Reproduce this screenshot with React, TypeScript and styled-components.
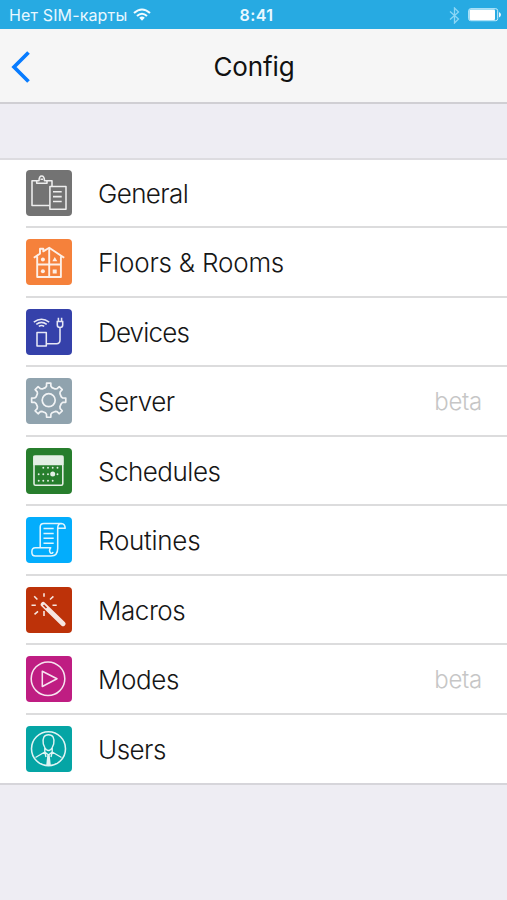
import React from 'react';
import styled, { createGlobalStyle } from 'styled-components';

const GlobalStyle = createGlobalStyle`
  * { box-sizing: border-box; }
  body { margin: 0; background: #eeedf3; font-family: Inter, "Liberation Sans", sans-serif; }
`;

const Screen = styled.div`
  display: flex;
  flex-direction: column;
  height: 900px;
  overflow: hidden;
  background: #eeedf3;
`;

const StatusBar = styled.header`
  display: grid;
  grid-template-columns: 1fr auto 1fr;
  align-items: center;
  flex: none;
  height: 29px;
  padding: 1px 5px 0 9px;
  background: #27aae2;
  color: #e9f8ff;
  font-size: 16px;
  line-height: 28px;
`;

const StatusGroup = styled.div<{ $end?: boolean }>`
  display: flex;
  align-items: center;
  justify-content: ${(p) => (p.$end ? 'flex-end' : 'flex-start')};
  gap: ${(p) => (p.$end ? '8px' : '6px')};
`;

const Carrier = styled.span`
  letter-spacing: 0.14px;
  white-space: nowrap;
`;

const Clock = styled.span`
  margin-left: 2px;
  font-weight: 600;
  letter-spacing: 0.4px;
`;

const NavBar = styled.nav`
  display: grid;
  grid-template-columns: 60px 1fr 60px;
  align-items: center;
  flex: none;
  height: 75px;
  border-bottom: 2px solid #d0cfd3;
  background: #f6f6f6;
`;

const BackButton = styled.button`
  display: flex;
  padding: 3px 0 0 10px;
  border: 0;
  background: none;
`;

const Title = styled.h1`
  margin: 2px 0 0 1px;
  color: #111;
  font-size: 26px;
  font-weight: 400;
  letter-spacing: -0.1px;
  line-height: 32px;
  text-align: center;
`;

const List = styled.ul`
  flex: none;
  margin: 54px 0 0;
  padding: 0;
  border-top: 2px solid #dddce0;
  border-bottom: 2px solid #d6d5da;
  background: #fff;
  list-style: none;
`;

const Row = styled.li`
  display: flex;
  align-items: center;
  height: 69.5px;
  padding-left: 26px;

  &:last-child {
    margin-bottom: -2.5px;
  }
`;

const Tile = styled.div<{ $color: string }>`
  flex: none;
  width: 46px;
  height: 46px;
  margin-top: -4px;
  border-radius: 4px;
  background: ${(p) => p.$color};
`;

const Glyph = styled.svg`
  display: block;
  width: 46px;
  height: 46px;
  fill: none;
  stroke: #fff;
  stroke-width: 1.55;
  stroke-linejoin: round;
  opacity: 0.88;
`;

const RowBody = styled.div<{ $divided: boolean }>`
  display: flex;
  flex: 1;
  align-items: center;
  justify-content: space-between;
  height: 100%;
  padding: 0 25px 2px 0;
`;

const Label = styled.span<{ $spacing: number }>`
  margin-left: 26px;
  color: #161616;
  font-size: 26px;
  font-weight: 300;
  letter-spacing: ${(p) => p.$spacing}px;
  line-height: 32px;
`;

const Note = styled.span`
  color: #c6c6c6;
  font-size: 24px;
  font-weight: 300;
  letter-spacing: -0.3px;
  line-height: 32px;
`;

const Separator = styled.li`
  height: 2px;
  margin: -3.5px 0 1.5px 26px;
  background: #dcdcdd;
`;

const gearPath = (() => {
  const points: string[] = [];
  for (let i = 0; i < 8; i++) {
    [[-15, 13], [-9, 14.2], [-7, 17.2], [7, 17.2], [9, 14.2], [15, 13]].forEach(([offset, radius]) => {
      const angle = ((i * 45 + offset) * Math.PI) / 180;
      points.push(`${(22.7 + radius * Math.sin(angle)).toFixed(2)} ${(22.2 - radius * Math.cos(angle)).toFixed(2)}`);
    });
  }
  return `M${points.join('L')}Z`;
})();

const calendarDots = [
  [17.3, 19.7], [22, 19.7], [26.7, 19.7], [31.5, 19.7],
  [12.7, 26.3], [17.3, 26.3], [22, 26.3], [31.5, 26.3],
  [12.7, 32.7], [17.3, 32.7], [22, 32.7], [26.7, 32.7],
];

const icons: Record<string, React.ReactNode> = {
  general: (
    <>
      <path d="M11 10.8H6V35.5H23.7M20.5 10.8H26V16.3" />
      <path d="M10.7 13.2V10.8H13C13 7.5 14 6 15.7 6S18.4 7.5 18.5 10.8H21V13.2Z M14.5 9.2H17" />
      <path d="M23.9 16.5H40V39.3H23.9ZM27 21.8H35.7M27 26.6H35.7M27 31.4H35.7" />
    </>
  ),
  floors: (
    <>
      <path d="M7.8 18.8L14 14.6V9.8H17.3V12.4L23.2 8.8L38.2 18.8M11.2 17.5V38H34.9V17.5" strokeWidth="1.9" />
      <path d="M23.2 10V38M11.2 25.5H34.7" strokeWidth="1.9" />
      <g fill="#fff" stroke="none">
        <circle cx="16.9" cy="20.5" r="2" />
        <path d="M28.8 18L31.3 22.3H26.3ZM26.7 30.4H30.7V34.4H26.7Z" />
        <circle cx="16.9" cy="32.3" r="2" />
      </g>
    </>
  ),
  devices: (
    <>
      <path d="M7.8 13.2Q15.5 7.2 23.2 13.2M10.3 15.4Q15.5 11.4 20.7 15.4M12.8 17.4Q15.5 15.5 18.2 17.4" strokeWidth="1.6" />
      <path d="M11 23.5H20.3V37H11ZM20.3 34.7H30.5Q34 34.7 34 31V18.5M30.5 12.5H37.4M31.3 12.5V16Q31.3 18.5 34 18.5T36.7 16V12.5M32.4 12.5V8.7M35.6 12.5V8.7" />
    </>
  ),
  server: (
    <>
      <path d={gearPath} strokeWidth="1.7" />
      <circle cx="22.7" cy="22.2" r="6.5" strokeWidth="1.7" />
    </>
  ),
  schedules: (
    <>
      <rect x="8" y="8.2" width="28.8" height="29" rx="1.5" />
      <path d="M8 8.2H36.8V16.5H8Z" fill="#fff" />
      <g fill="#fff" stroke="none">
        {calendarDots.map(([x, y]) => <circle key={`${x}-${y}`} cx={x} cy={y} r="0.95" />)}
        <circle cx="26.7" cy="26" r="2.5" />
      </g>
    </>
  ),
  routines: (
    <>
      <path d="M14.2 30.8V10Q14.2 6.5 17.8 6.5H35.3Q39 6.7 39.2 11.3H31.7V31.5Q31.7 39 25 39H9.3C4.7 39 4.7 30.8 9.3 30.8H24.7Q22.5 33.5 24.5 36Q26.5 37 27 34.8M35.3 6.5Q31.7 6.7 31.7 11.3" />
      <path d="M17.5 11.5H27.7M17.5 16.4H27.7M17.5 21.3H27.7M17.5 26.2H27.7" />
    </>
  ),
  macros: (
    <>
      <path d="M17.2 17.5L37 36.7" stroke="#fff" strokeWidth="5" strokeLinecap="round" />
      <path d="M17.5 18L20.5 21" stroke="#bd3512" strokeWidth="1.7" />
      <path d="M18 6.2V9.7M8.2 9.3L11.4 12.5M5.5 18.3H9.8M8.5 27.3L12 24.4M18 24V29M26.5 18.3H30.7M24 12.5L27.4 9.3" strokeWidth="1.6" />
    </>
  ),
  modes: (
    <>
      <circle cx="22" cy="22.7" r="16.8" />
      <path d="M16.3 15.2V30.5L31 22.7Z" />
    </>
  ),
  users: (
    <>
      <circle cx="22.5" cy="22.7" r="17" />
      <path d="M17.3 18C16.3 12 18 8.7 22.5 8.7S28.7 12 27.7 18L26.2 21.5Q24.7 24.5 22.5 24.5T18.8 21.5ZM18.8 21.5V26L9.5 31.5M26.2 21.5V26L35.5 31.5M18.8 26L22.5 29L26.2 26M18.8 26L20 31M26.2 26L25 31" strokeWidth="1.4" />
      <path d="M21.3 29H23.7L24.8 39.2H20.2Z" fill="#fff" stroke="none" />
    </>
  ),
};

const items = [
  { id: 'general', label: 'General', color: '#737373', spacing: -0.62 },
  { id: 'floors', label: 'Floors & Rooms', color: '#f5813b', spacing: -0.2 },
  { id: 'devices', label: 'Devices', color: '#3541aa', spacing: -0.82 },
  { id: 'server', label: 'Server', color: '#90a3ae', spacing: -0.5, note: 'beta' },
  { id: 'schedules', label: 'Schedules', color: '#277e2d', spacing: -0.5 },
  { id: 'routines', label: 'Routines', color: '#03adfc', spacing: -0.27 },
  { id: 'macros', label: 'Macros', color: '#bd3209', spacing: -0.45 },
  { id: 'modes', label: 'Modes', color: '#bf1d82', spacing: -0.4 },
  { id: 'users', label: 'Users', color: '#05a5a5', spacing: -0.5 },
].map((item) => (item.id === 'modes' ? { ...item, note: 'beta' } : item));

export default function App() {
  return (
    <Screen>
      <GlobalStyle />
      <StatusBar>
        <StatusGroup>
          <Carrier>Нет SIM-карты</Carrier>
          <svg width="18" height="14" viewBox="0 0 18 14" fill="none" stroke="#f3fcff" strokeWidth="2.1">
            <path d="M1 5Q9 -2 17 5M4 8Q9 3.5 14 8" />
            <path d="M6.2 9.7Q9 7.5 11.8 9.7L9 12.7Z" fill="#f3fcff" stroke="none" />
          </svg>
        </StatusGroup>
        <Clock>8:41</Clock>
        <StatusGroup $end>
          <svg width="11" height="17" viewBox="0 0 11 17" fill="none" stroke="#8bd6f5" strokeWidth="1.3">
            <path d="M1 4.5L9.5 12L5.5 16V1L9.5 5L1 12.5" />
          </svg>
          <svg width="34" height="14" viewBox="0 0 34 14">
            <rect x=".7" y=".7" width="29" height="12" rx="2" fill="none" stroke="#c7edfc" />
            <rect x="1.5" y="1.5" width="25.5" height="10.5" rx="1" fill="#fff" />
            <path d="M31 4Q35 6.7 31 9.5Z" fill="#e7f8ff" />
          </svg>
        </StatusGroup>
      </StatusBar>
      <NavBar>
        <BackButton aria-label="Back">
          <svg width="22" height="32" viewBox="0 0 22 32" fill="none" stroke="#087cff" strokeWidth="3.7">
            <path d="M18.5 1.5L4 16L18.5 30.5" />
          </svg>
        </BackButton>
        <Title>Config</Title>
      </NavBar>
      <List>
        {items.map((item, index) => (
          <React.Fragment key={item.id}>
            <Row>
              <Tile $color={item.color}><Glyph viewBox="0 0 46 46">{icons[item.id]}</Glyph></Tile>
              <RowBody $divided={index < items.length - 1}>
                <Label $spacing={item.spacing}>{item.label}</Label>
                {item.note && <Note>{item.note}</Note>}
              </RowBody>
            </Row>
            {index < items.length - 1 && <Separator role="presentation" />}
          </React.Fragment>
        ))}
      </List>
    </Screen>
  );
}
